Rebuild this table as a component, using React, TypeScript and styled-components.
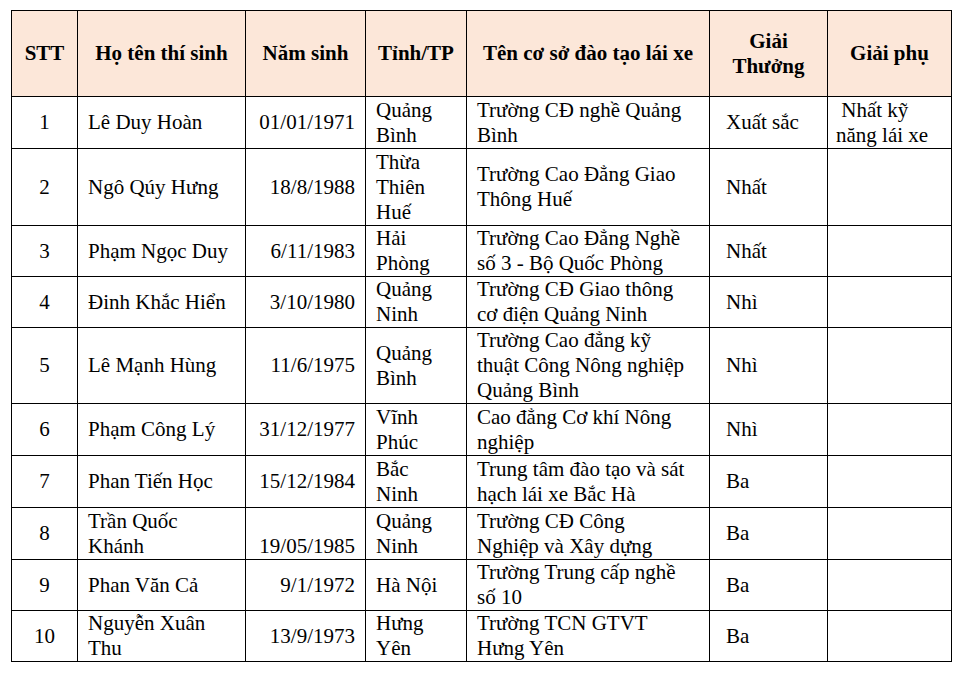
import React from "react";
import styled, { createGlobalStyle } from "styled-components";

const GlobalStyle = createGlobalStyle`
  body {
    margin: 0;
    background: #ffffff;
  }
`;

const Page = styled.div`
  padding: 10px 0 0 11px;
`;

const Table = styled.table`
  border-collapse: collapse;
  table-layout: fixed;
  width: 941px;
  font-family: "Liberation Serif", "Times New Roman", serif;
  font-size: 21px;
  line-height: 25px;
  color: #000;
`;

const Col = styled.col<{ $w: number }>`
  width: ${(p) => p.$w}px;
`;

const HeadRow = styled.tr`
  height: 86px;
  background: #fce7d9;
`;

const Row = styled.tr<{ $h: number }>`
  height: ${(p) => p.$h}px;
`;

const Th = styled.th`
  border: 1px solid #000;
  font-weight: 700;
  text-align: center;
  vertical-align: middle;
  padding: 0 4px;
`;

const Td = styled.td<{ $align?: string; $valign?: string; $padL?: number; $padR?: number }>`
  border: 1px solid #000;
  text-align: ${(p) => p.$align || "left"};
  vertical-align: ${(p) => p.$valign || "middle"};
  padding: 0 ${(p) => p.$padR ?? 4}px 0 ${(p) => p.$padL ?? 10}px;
  white-space: pre;
  overflow: hidden;
`;

type Entry = {
  stt: string;
  name: string;
  dob: string;
  dobBottom?: boolean;
  province: string;
  school: string;
  award: string;
  extra?: string;
  h: number;
};

const rows: Entry[] = [
  { stt: "1", name: "Lê Duy Hoàn", dob: "01/01/1971", province: "Quảng\nBình", school: "Trường CĐ nghề Quảng\nBình", award: "Xuất sắc", extra: " Nhất kỹ\nnăng lái xe", h: 52 },
  { stt: "2", name: "Ngô Qúy Hưng", dob: "18/8/1988", province: "Thừa\nThiên\nHuế", school: "Trường Cao Đẳng Giao\nThông Huế", award: "Nhất", h: 77 },
  { stt: "3", name: "Phạm Ngọc Duy", dob: "6/11/1983", province: "Hải\nPhòng", school: "Trường Cao Đẳng Nghề\nsố 3 - Bộ Quốc Phòng", award: "Nhất", h: 51 },
  { stt: "4", name: "Đinh Khắc Hiển", dob: "3/10/1980", province: "Quảng\nNinh", school: "Trường CĐ Giao thông\ncơ điện Quảng Ninh", award: "Nhì", h: 51 },
  { stt: "5", name: "Lê Mạnh Hùng", dob: "11/6/1975", province: "Quảng\nBình", school: "Trường Cao đẳng kỹ\nthuật Công Nông nghiệp\nQuảng Bình", award: "Nhì", h: 76 },
  { stt: "6", name: "Phạm Công Lý", dob: "31/12/1977", province: "Vĩnh\nPhúc", school: "Cao đẳng Cơ khí Nông\nnghiệp", award: "Nhì", h: 52 },
  { stt: "7", name: "Phan Tiến Học", dob: "15/12/1984", province: "Bắc\nNinh", school: "Trung tâm đào tạo và sát\nhạch lái xe Bắc Hà", award: "Ba", h: 52 },
  { stt: "8", name: "Trần Quốc\nKhánh", dob: "19/05/1985", dobBottom: true, province: "Quảng\nNinh", school: "Trường CĐ Công\nNghiệp và Xây dựng", award: "Ba", h: 52 },
  { stt: "9", name: "Phan Văn Cả", dob: "9/1/1972", province: "Hà Nội", school: "Trường Trung cấp nghề\nsố 10", award: "Ba", h: 51 },
  { stt: "10", name: "Nguyễn Xuân\nThu", dob: "13/9/1973", province: "Hưng\nYên", school: "Trường TCN GTVT\nHưng Yên", award: "Ba", h: 50 },
];

const widths = [66, 168, 120, 101, 243, 118, 124];

export default function App() {
  return (
    <Page>
      <GlobalStyle />
      <Table>
        <colgroup>
          {widths.map((w, i) => (
            <Col key={i} $w={w} />
          ))}
        </colgroup>
        <thead>
          <HeadRow>
            <Th>STT</Th>
            <Th>Họ tên thí sinh</Th>
            <Th>Năm sinh</Th>
            <Th>Tỉnh/TP</Th>
            <Th>Tên cơ sở đào tạo lái xe</Th>
            <Th>
              Giải
              <br />
              Thưởng
            </Th>
            <Th>Giải phụ</Th>
          </HeadRow>
        </thead>
        <tbody>
          {rows.map((r) => (
            <Row key={r.stt} $h={r.h}>
              <Td $align="center" $padL={4}>{r.stt}</Td>
              <Td>{r.name}</Td>
              <Td $align="right" $padR={10} $valign={r.dobBottom ? "bottom" : "middle"}>
                {r.dob}
              </Td>
              <Td>{r.province}</Td>
              <Td>{r.school}</Td>
              <Td $padL={16}>{r.award}</Td>
              <Td $padL={8}>{r.extra || ""}</Td>
            </Row>
          ))}
        </tbody>
      </Table>
    </Page>
  );
}
